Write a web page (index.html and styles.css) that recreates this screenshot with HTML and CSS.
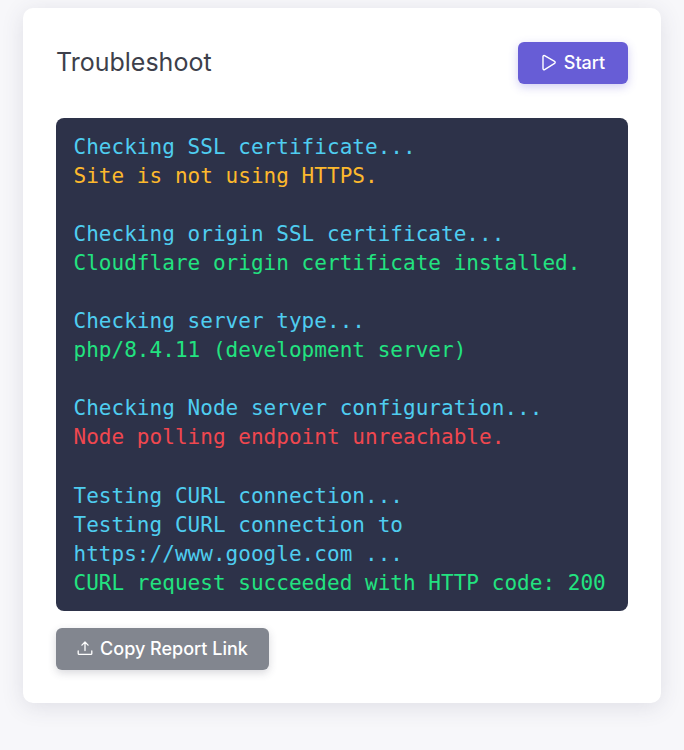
FILE: index.html
```html
<!DOCTYPE html>
<html lang="en">
<head>
<meta charset="utf-8">
<title>Troubleshoot</title>
<link rel="stylesheet" href="styles.css">
</head>
<body>
<main class="card">
  <header class="card-head">
    <h1 class="title">Troubleshoot</h1>
    <button class="btn btn-primary" type="button">
      <svg class="icon icon-play" viewBox="0 0 16 18" fill="none" stroke="currentColor" stroke-width="1.4" stroke-linejoin="round" stroke-linecap="round"><path d="M2 2.6c0-.9.9-1.4 1.6-1l10 5.7c.8.4.8 1.6 0 2l-10 6.3c-.7.4-1.6-.1-1.6-1z"/></svg>
      <span>Start</span>
    </button>
  </header>
  <pre class="console"><span class="info">Checking SSL certificate...</span>
<span class="warn">Site is not using HTTPS.</span>

<span class="info">Checking origin SSL certificate...</span>
<span class="ok">Cloudflare origin certificate installed.</span>

<span class="info">Checking server type...</span>
<span class="ok">php/8.4.11 (development server)</span>

<span class="info">Checking Node server configuration...</span>
<span class="err">Node polling endpoint unreachable.</span>

<span class="info">Testing CURL connection...</span>
<span class="info">Testing CURL connection to</span>
<span class="info">https://www.google.com ...</span>
<span class="ok">CURL request succeeded with HTTP code: 200</span></pre>
  <button class="btn btn-secondary" type="button">
    <svg class="icon icon-upload" viewBox="0 0 16 16" fill="none" stroke="currentColor" stroke-width="1.3" stroke-linecap="round" stroke-linejoin="round"><path d="M8 10.5V2.2M4.9 5.1 8 2l3.1 3.1M1.2 11v2.4c0 .5.4.9.9.9h11.8c.5 0 .9-.4.9-.9V11"/></svg>
    <span>Copy Report Link</span>
  </button>
</main>
</body>
</html>
```
FILE: styles.css
```css
* { box-sizing: border-box; }
html, body { height: 100%; }
body {
  margin: 0;
  padding: 8px 23px 0;
  background: #f7f7fa;
  font-family: "Inter", "Noto Sans", sans-serif;
  overflow: hidden;
}
.card {
  background: #fff;
  border-radius: 10px;
  height: 695px;
  padding: 34px 33px;
  box-shadow: 0 4px 22px rgba(60, 60, 90, 0.13);
}
.card-head {
  display: flex;
  align-items: center;
  justify-content: space-between;
  height: 42px;
  margin-bottom: 34px;
}
.title {
  margin: 0 0 2px;
  font-size: 25px;
  font-weight: 400;
  letter-spacing: 0;
  color: #3d3f4b;
}
.btn {
  display: inline-flex;
  align-items: center;
  justify-content: center;
  gap: 7px;
  height: 42px;
  border: 0;
  border-radius: 6px;
  color: #fff;
  font-family: inherit;
  font-size: 18px;
  font-weight: 500;
  padding: 0 0 2px;
}
.btn-primary {
  width: 110px;
  background: #675dd6;
  box-shadow: 0 3px 10px rgba(103, 93, 214, 0.3);
}
.btn-secondary {
  width: 213px;
  margin-top: 17px;
  background: #82868f;
  box-shadow: 0 3px 8px rgba(60, 60, 80, 0.2);
}
.icon { width: 16px; height: 16px; flex: none; }
.icon-play { height: 18px; margin-top: 2px; }
.console {
  margin: 0;
  height: 493px;
  padding: 14.5px 17.5px;
  border-radius: 8px;
  background: #2d3249;
  font-family: "DejaVu Sans Mono", "Liberation Mono", monospace;
  font-size: 21px;
  letter-spacing: 0.03px;
  line-height: 29.1px;
  overflow: hidden;
}
.info { color: #4fcdf0; }
.warn { color: #fdb92d; }
.ok { color: #22e380; }
.err { color: #f0474f; }
```
